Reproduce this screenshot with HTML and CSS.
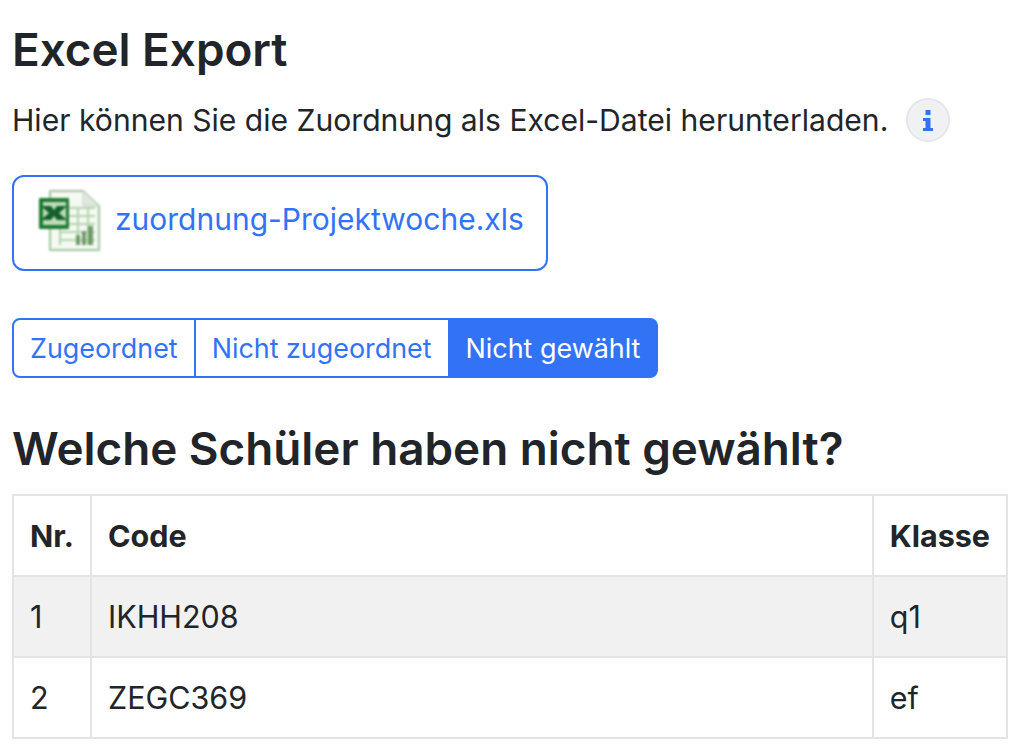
FILE: index.html
```html
<!DOCTYPE html>
<html lang="de">
<head>
  <meta charset="UTF-8" />
  <title>Excel Export</title>
  <link rel="stylesheet" href="styles.css">
</head>
<body>
  <h2 class="titel">Excel Export</h2>

  <div class="hinweis">
    <span>Hier können Sie die Zuordnung als Excel-Datei herunterladen.</span>
    <span class="info-btn">
      <svg width="10" height="21" viewBox="0 0 10 21"><path d="M2.500 0h5v5h-5zM0 8h7.500v10H10v3H0v-3h2.500v-7H0z" fill="#3273f6"/></svg>
    </span>
  </div>

  <a class="datei" href="#">
    <svg class="xls-icon" width="64" height="64" viewBox="0 0 64 64">
      <path d="M12 2h33l16 15v44H12z" fill="#f4f9f2" stroke="#a3c4a0" stroke-width="2"/>
      <path d="M45 2v15h16z" fill="#dfe8dd" stroke="#c5d4c3"/>
      <path d="M31 19h26M31 27h26M31 35h26M22 43h35M22 51h35M40 19v36M50 19v36M22 40v16" stroke="#b5d4b0" stroke-width="2" fill="none"/>
      <path d="M38 56V46h4v10zM44 56V42h4v14zM50 56V37h5v19z" fill="#6f9a6a"/>
      <rect x="1" y="9" width="30" height="31" rx="1" fill="#1f7a33"/>
      <rect x="5" y="13" width="23" height="23" fill="#bfdcb8"/>
      <path d="M3 17h10l3 4 3-4h10l-8 7 8 7H19l-3-4-3 4H3l8-7z" fill="#14602a"/>
    </svg>
    <span class="datei-name">zuordnung-Projektwoche.xls</span>
  </a>

  <div class="tabs">
    <a class="tab" href="#">Zugeordnet</a>
    <a class="tab" href="#">Nicht zugeordnet</a>
    <a class="tab aktiv" href="#">Nicht gewählt</a>
  </div>

  <h2 class="frage">Welche Schüler haben nicht gewählt?</h2>

  <table class="liste">
    <thead>
      <tr><th class="sp-nr">Nr.</th><th>Code</th><th class="sp-klasse">Klasse</th></tr>
    </thead>
    <tbody>
      <tr class="grau"><td>1</td><td>IKHH208</td><td>q1</td></tr>
      <tr><td>2</td><td>ZEGC369</td><td>ef</td></tr>
    </tbody>
  </table>
</body>
</html>
```

FILE: styles.css
```css
body {
  font-family: Inter, "Liberation Sans", sans-serif;
  color: #212529;
  margin: 0;
  padding: 24px 16px 0 12px;
  background: #fff;
}

.titel {
  font-size: 45.8px;
  font-weight: 600;
  line-height: 52px;
  margin: 0 0 22px;
}

.hinweis {
  display: flex;
  align-items: center;
  gap: 18px;
  font-size: 30.1px;
  line-height: 44px;
  margin-bottom: 33px;
}

.info-btn {
  width: 44px;
  height: 44px;
  box-sizing: border-box;
  border: 2px solid #e4e6e9;
  border-radius: 50%;
  background: #f0f1f3;
  display: flex;
  align-items: center;
  justify-content: center;
}

.datei {
  display: flex;
  align-items: center;
  gap: 13px;
  width: 536px;
  height: 96px;
  box-sizing: border-box;
  padding: 0 0 5px 24px;
  border: 2px solid #3273f6;
  border-radius: 12px;
  color: #3273f6;
  font-size: 30px;
  text-decoration: none;
  margin-bottom: 47px;
}

.datei-name {
  margin-bottom: 3px;
}

.xls-icon {
  filter: blur(0.8px);
}

.tabs {
  display: flex;
  width: fit-content;
  margin-bottom: 43px;
}

.tab {
  height: 60px;
  box-sizing: border-box;
  display: flex;
  align-items: center;
  padding: 0 16px;
  border: 2px solid #3273f6;
  border-left-width: 0;
  color: #3273f6;
  font-size: 26.9px;
  text-decoration: none;
}

.tab:first-child {
  border-left-width: 2px;
  border-radius: 8px 0 0 8px;
}

.tab:last-child {
  border-radius: 0 8px 8px 0;
}

.tab.aktiv {
  background: #3273f6;
  color: #fff;
}

.frage {
  font-size: 45.8px;
  font-weight: 600;
  line-height: 56px;
  margin: 0 0 17px;
}

.liste {
  width: 996px;
  border-collapse: collapse;
  font-size: 30.5px;
}

.liste th, .liste td {
  border: 2px solid #e2e4e8;
  padding: 0 16px;
  height: 79px;
  text-align: left;
}

.liste th {
  font-weight: 700;
}

.sp-nr {
  width: 42px;
}

.sp-klasse {
  width: 100px;
}

.grau {
  background: #f1f1f1;
}
```
